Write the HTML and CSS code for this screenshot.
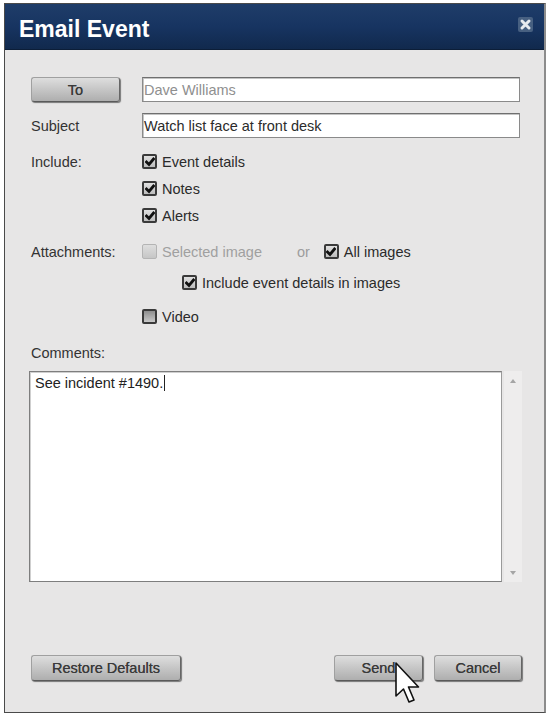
FILE: index.html
```html
<!DOCTYPE html>
<html lang="en">
<head>
  <meta charset="UTF-8">
  <title>Email Event</title>
  <link rel="stylesheet" href="styles.css">
</head>
<body>
  <div class="dialog">
    <div class="titlebar">
      <h1>Email Event</h1>
      <span class="close">
        <svg width="15" height="15" viewBox="0 0 15 15">
          <rect x="0" y="0" width="15" height="15" rx="2" fill="#4d6585"/>
          <path d="M4 4 L11 11 M11 4 L4 11" stroke="#fff" stroke-width="3" stroke-linecap="round"/>
        </svg>
      </span>
    </div>

    <div class="form">
      <div class="row line">
        <button class="btn btn-to">To</button>
        <div class="field muted">Dave Williams</div>
      </div>

      <div class="row line subject">
        <span class="label">Subject</span>
        <div class="field">Watch list face at front desk</div>
      </div>

      <div class="row include">
        <span class="label opt">Include:</span>
        <div class="options">
          <label class="opt"><span class="box checked"><svg viewBox="0 0 10 10"><path d="M1.5 5 L4 7.5 L8.5 2"/></svg></span>Event details</label>
          <label class="opt"><span class="box checked"><svg viewBox="0 0 10 10"><path d="M1.5 5 L4 7.5 L8.5 2"/></svg></span>Notes</label>
          <label class="opt"><span class="box checked"><svg viewBox="0 0 10 10"><path d="M1.5 5 L4 7.5 L8.5 2"/></svg></span>Alerts</label>
        </div>
      </div>

      <div class="row attach">
        <span class="label opt">Attachments:</span>
        <div class="opt">
          <label class="opt disabled"><span class="box off"></span>Selected image</label>
          <span class="or">or</span>
          <label class="opt"><span class="box checked"><svg viewBox="0 0 10 10"><path d="M1.5 5 L4 7.5 L8.5 2"/></svg></span>All images</label>
        </div>
      </div>

      <div class="row sub">
        <span></span>
        <label class="opt indent"><span class="box checked"><svg viewBox="0 0 10 10"><path d="M1.5 5 L4 7.5 L8.5 2"/></svg></span>Include event details in images</label>
      </div>

      <div class="row video">
        <span></span>
        <label class="opt"><span class="box"></span>Video</label>
      </div>

      <div class="label comments-label">Comments:</div>
      <div class="comments">
        <div class="textarea">See incident #1490.<span class="caret"></span></div>
        <div class="scroll">
          <span class="arrow up"></span>
          <span class="arrow down"></span>
        </div>
      </div>

      <div class="footer">
        <button class="btn btn-restore">Restore Defaults</button>
        <div class="actions">
          <button class="btn btn-send">Send</button>
          <button class="btn btn-cancel">Cancel</button>
        </div>
      </div>
    </div>
  </div>

  <!-- mouse pointer hovering the Send button -->
  <svg class="pointer" width="26" height="44" viewBox="0 0 26 44">
    <path d="M1 1 L1 34 L8.5 27 L14 40 L19 38 L13.5 25 L23.5 25 Z" fill="#fff" stroke="#111" stroke-width="1.6" stroke-linejoin="round"/>
  </svg>
</body>
</html>
```

FILE: styles.css
```css
body { margin: 0; background: #fff; font-family: "Liberation Sans", Arial, sans-serif; font-size: 14.5px; color: #2b2b2b; }

.dialog { margin: 3px 3px 0 4px; width: 539px; height: 708px; border: 1px solid #4a4a4a; border-right: 2px solid #8c8c8c; background: #e7e6e6; display: flex; flex-direction: column; }

.titlebar { height: 45px; background: linear-gradient(#1f3d69, #173461 50%, #11294d); display: flex; align-items: center; justify-content: space-between; padding: 0 10px 0 14px; border-bottom: 1px solid #0c1e38; }
.titlebar h1 { margin: 0; color: #fff; font-size: 23px; font-weight: bold; padding-top: 5px; }
.close { display: flex; margin-top: -4px; margin-right: 1px; opacity: 0.9; }

.form { padding: 27px 22px 0 26px; display: flex; flex-direction: column; flex: 1; }

.row { display: grid; grid-template-columns: 111px 378px; align-items: center; }
.line { height: 25px; }
.subject { margin-top: 11px; }
.label { color: #333; }

.field { height: 23px; border: 1px solid #8a8a8a; border-top-color: #6f6f6f; background: #fff; display: flex; align-items: center; padding: 0 1px; box-shadow: inset 1px 1px 0 #c4c4c4; }
.muted { color: #8f8f8f; }

.opt { height: 27px; display: flex; align-items: center; }
.include { margin-top: 10px; align-items: start; }
.options { display: flex; flex-direction: column; }

/* checkbox squares: dark frame, light face */
.box { width: 11px; height: 11px; border: 2px solid #3a3a3a; border-radius: 2px; background: linear-gradient(#8e8e8e, #c8c8c8); margin-right: 5px; display: inline-flex; align-items: center; justify-content: center; }
.box.checked { background: linear-gradient(#e0e0e0, #bdbdbd); }
.box svg { width: 10px; height: 10px; }
.box svg path { fill: none; stroke: #111; stroke-width: 2.8; stroke-linecap: square; }
.box.off { border: 1px solid #b4b4b4; width: 13px; height: 13px; background: linear-gradient(#dedede, #c6c6c6); }

.attach { margin-top: 9px; }
.disabled { color: #a0a0a0; }
.or { color: #9d9d9d; margin: 0 14px 0 35px; }
.sub { margin-top: 4px; }
.indent { padding-left: 40px; }
.video { margin-top: 7px; }

.comments-label { margin-top: 14px; height: 18px; line-height: 18px; }
.comments { margin-top: 9px; margin-left: -2px; display: flex; height: 211px; }
.textarea { width: 463px; border: 1px solid #7e7e7e; border-right-color: #9a9a9a; background: #fff; padding: 3px 5px; color: #222; box-shadow: inset 1px 1px 0 #cfcfcf; }
.caret { display: inline-block; width: 1px; height: 16px; background: #222; vertical-align: -3px; margin-left: 1px; }
.scroll { width: 18px; margin-left: 2px; background: #eeeded; display: flex; flex-direction: column; justify-content: space-between; align-items: center; padding: 8px 0 7px; }
.arrow { width: 0; height: 0; border-left: 3px solid transparent; border-right: 3px solid transparent; }
.arrow.up { border-bottom: 4px solid #a5a5a5; }
.arrow.down { border-top: 4px solid #a5a5a5; }

.footer { margin-top: 73px; display: flex; justify-content: space-between; align-items: center; }
.actions { display: flex; gap: 11px; }

.btn { font-family: inherit; font-size: 14.5px; color: #3a3a3a; height: 26px; padding: 0; border: 1px solid #a0a0a0; border-right-color: #666; border-bottom-color: #5a5a5a; border-radius: 3px; background: linear-gradient(#dedede, #c8c8c8 45%, #aeaeae); box-shadow: 1px 1px 1px #777; text-shadow: 0 0 0.3px #444; }
.btn-to { width: 89px; height: 25px; font-weight: normal; }
.btn-restore { width: 150px; }
.btn-send { width: 89px; }
.btn-cancel { width: 88px; }

.pointer { position: absolute; left: 395px; top: 662px; }
```
